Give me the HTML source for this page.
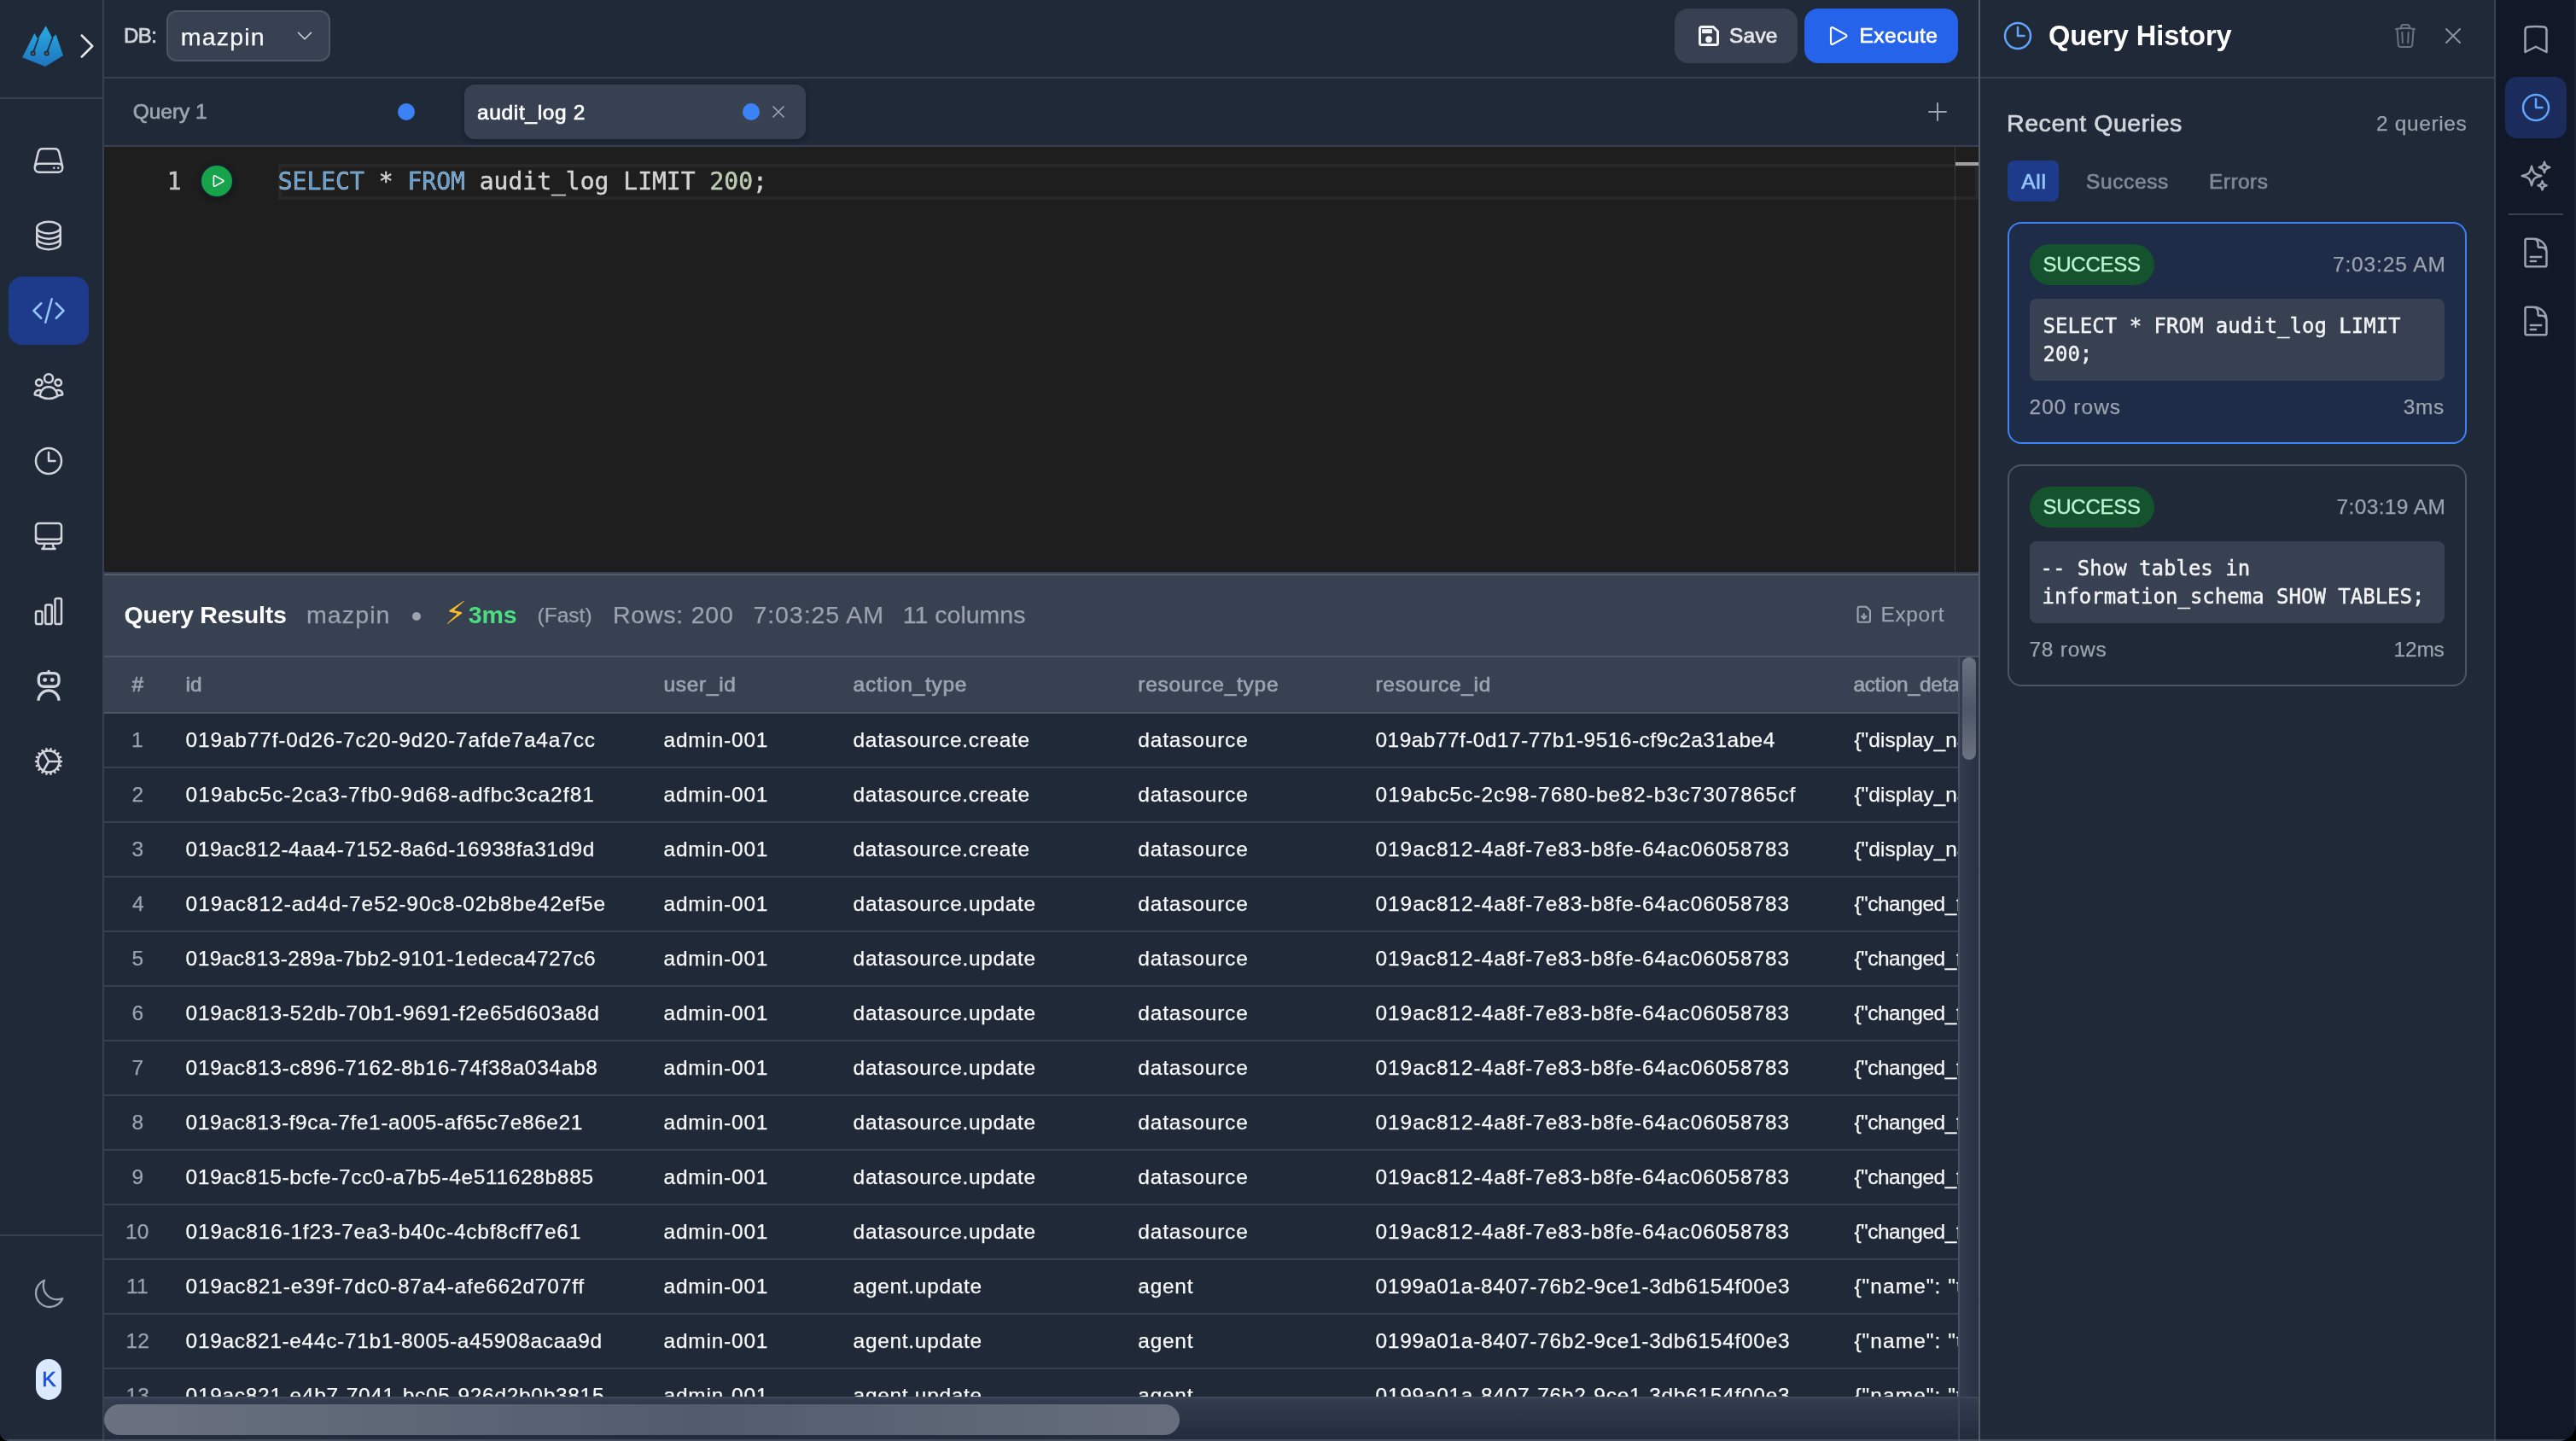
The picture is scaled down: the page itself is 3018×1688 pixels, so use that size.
<!DOCTYPE html>
<html lang="en"><head><meta charset="utf-8"><title>SQL Editor - Query History</title><style>
html,body{margin:0;padding:0;background:#000;}
#app{position:relative;width:3018px;height:1688px;overflow:hidden;background:#1f2937;font-family:'Liberation Sans',sans-serif;will-change:transform;}
#app div,#app svg{position:absolute;box-sizing:border-box;}
#app svg{overflow:visible;}
#app .t{white-space:pre;line-height:1;}
#app .t span{position:static;}
#app .c{overflow:hidden;}
</style></head><body><div id="app">
<div style="left:0px;top:0px;width:120px;height:1688px;background:#1f2937;"></div>
<div style="left:120px;top:0px;width:2px;height:1688px;background:#374151;"></div>
<div style="left:0px;top:114px;width:120px;height:2px;background:#374151;"></div>
<div style="left:0px;top:1446px;width:120px;height:2px;background:#374151;"></div>
<div style="left:122px;top:0px;width:2196px;height:90px;background:#1f2937;"></div>
<div style="left:122px;top:90px;width:2196px;height:2px;background:#374151;"></div>
<div style="left:122px;top:92px;width:2196px;height:78px;background:#1f2937;"></div>
<div style="left:122px;top:170px;width:2196px;height:2px;background:#374151;"></div>
<div style="left:122px;top:172px;width:2196px;height:498px;background:#1e1e1e;"></div>
<div style="left:326px;top:192px;width:1992px;height:42px;border:4px solid #282828;"></div>
<div style="left:2290px;top:172px;width:1px;height:498px;background:#3c3c3c;"></div>
<div style="left:2291px;top:190px;width:27px;height:4px;background:#a0a09c;"></div>
<div style="left:122px;top:670px;width:2196px;height:2px;background:#374151;"></div>
<div style="left:122px;top:672px;width:2196px;height:2px;background:#555b67;"></div>
<div style="left:122px;top:674px;width:2196px;height:94px;background:#374151;"></div>
<div style="left:122px;top:768px;width:2196px;height:2px;background:#4b5563;"></div>
<div style="left:122px;top:770px;width:2172px;height:64px;background:#374151;"></div>
<div style="left:122px;top:834px;width:2172px;height:2px;background:#4b5563;"></div>
<svg style="left:20px;top:24px" width="64" height="64" viewBox="20 24 64 64"><defs><linearGradient id="lg" x1="0" y1="0" x2="0" y2="1"><stop offset="0" stop-color="#29abe2"/><stop offset="1" stop-color="#1e74bf"/></linearGradient></defs><polygon points="26.1,67.2 40.4,39 44.4,45.8 53.7,30.3 61.3,44.6 65.6,40.3 74,65 53.1,78.1" fill="url(#lg)"/><path d="M45 45 L38.9 61.5 M61.6 44 L54.9 61.5" stroke="#1f2937" stroke-width="1.7" fill="none"/><circle cx="38.7" cy="62.5" r="3" fill="#1f2937"/><circle cx="54.7" cy="62.4" r="3" fill="#1f2937"/><circle cx="38.7" cy="62.5" r="1.5" fill="#5a5a5a"/><circle cx="54.7" cy="62.4" r="1.5" fill="#5a5a5a"/></svg>
<svg style="left:82px;top:34px" width="40" height="40" viewBox="0 0 24 24" fill="none" stroke="#e5e7eb" stroke-width="1.5" stroke-linecap="round" stroke-linejoin="round"><path d="m8.25 4.5 7.5 7.5-7.5 7.5"/></svg>
<div style="left:10px;top:324px;width:94px;height:80px;background:#1e3a8a;border-radius:16px;"></div>
<svg style="left:37px;top:168px" width="40" height="40" viewBox="0 0 24 24" fill="none" stroke="#d1d5db" stroke-width="1.5" stroke-linecap="round" stroke-linejoin="round"><path d="M21.75 17.25v-.228a4.5 4.5 0 0 0-.12-1.03l-2.268-9.64a3.375 3.375 0 0 0-3.285-2.602H7.923a3.375 3.375 0 0 0-3.285 2.602l-2.268 9.64a4.5 4.5 0 0 0-.12 1.03v.228m19.5 0a3 3 0 0 1-3 3H5.25a3 3 0 0 1-3-3m19.5 0a3 3 0 0 0-3-3H5.25a3 3 0 0 0-3 3m16.5 0h.008v.008h-.008v-.008Zm-3 0h.008v.008h-.008v-.008Z"/></svg>
<svg style="left:37px;top:256px" width="40" height="40" viewBox="0 0 24 24" fill="none" stroke="#d1d5db" stroke-width="1.5" stroke-linecap="round" stroke-linejoin="round"><path d="M20.25 6.375c0 2.278-3.694 4.125-8.25 4.125S3.75 8.653 3.75 6.375m16.5 0c0-2.278-3.694-4.125-8.25-4.125S3.75 4.097 3.75 6.375m16.5 0v11.25c0 2.278-3.694 4.125-8.25 4.125s-8.25-1.847-8.25-4.125V6.375m16.5 0v3.75m-16.5-3.75v3.75m16.5 0v3.75C20.25 16.153 16.556 18 12 18s-8.25-1.847-8.25-4.125v-3.75m16.5 0c0 2.278-3.694 4.125-8.25 4.125s-8.25-1.847-8.25-4.125"/></svg>
<svg style="left:37px;top:344px" width="40" height="40" viewBox="0 0 24 24" fill="none" stroke="#93c5fd" stroke-width="1.5" stroke-linecap="round" stroke-linejoin="round"><path d="M17.25 6.75 22.5 12l-5.25 5.25m-10.5 0L1.5 12l5.25-5.25m7.5-3-4.5 16.5"/></svg>
<svg style="left:37px;top:432px" width="40" height="40" viewBox="0 0 24 24" fill="none" stroke="#d1d5db" stroke-width="1.5" stroke-linecap="round" stroke-linejoin="round"><path d="M18 18.72a9.094 9.094 0 0 0 3.741-.479 3 3 0 0 0-4.682-2.72m.94 3.198.001.031c0 .225-.012.447-.037.666A11.944 11.944 0 0 1 12 21c-2.17 0-4.207-.576-5.963-1.584A6.062 6.062 0 0 1 6 18.719m12 0a5.971 5.971 0 0 0-.941-3.197m0 0A5.995 5.995 0 0 0 12 12.75a5.995 5.995 0 0 0-5.058 2.772m0 0a3 3 0 0 0-4.681 2.72 8.986 8.986 0 0 0 3.74.477m.94-3.197a5.971 5.971 0 0 0-.94 3.197M15 6.75a3 3 0 1 1-6 0 3 3 0 0 1 6 0Zm6 3a2.25 2.25 0 1 1-4.5 0 2.25 2.25 0 0 1 4.5 0Zm-13.5 0a2.25 2.25 0 1 1-4.5 0 2.25 2.25 0 0 1 4.5 0Z"/></svg>
<svg style="left:37px;top:520px" width="40" height="40" viewBox="0 0 24 24" fill="none" stroke="#d1d5db" stroke-width="1.5" stroke-linecap="round" stroke-linejoin="round"><path d="M12 6v6h4.5m4.5 0a9 9 0 1 1-18 0 9 9 0 0 1 18 0Z"/></svg>
<svg style="left:37px;top:608px" width="40" height="40" viewBox="0 0 24 24" fill="none" stroke="#d1d5db" stroke-width="1.5" stroke-linecap="round" stroke-linejoin="round"><path d="M9 17.25v1.007a3 3 0 0 1-.879 2.122L7.5 21h9l-.621-.621A3 3 0 0 1 15 18.257V17.25m6-12V15a2.25 2.25 0 0 1-2.25 2.25H5.25A2.25 2.25 0 0 1 3 15V5.25m18 0A2.25 2.25 0 0 0 18.75 3H5.25A2.25 2.25 0 0 0 3 5.25m18 0V12a2.25 2.25 0 0 1-2.25 2.25H5.25A2.25 2.25 0 0 1 3 12V5.25"/></svg>
<svg style="left:37px;top:696px" width="40" height="40" viewBox="0 0 24 24" fill="none" stroke="#d1d5db" stroke-width="1.5" stroke-linecap="round" stroke-linejoin="round"><path d="M3 13.125C3 12.504 3.504 12 4.125 12h2.25c.621 0 1.125.504 1.125 1.125v6.75C7.5 20.496 6.996 21 6.375 21h-2.25A1.125 1.125 0 0 1 3 19.875v-6.75ZM9.75 8.625c0-.621.504-1.125 1.125-1.125h2.25c.621 0 1.125.504 1.125 1.125v11.25c0 .621-.504 1.125-1.125 1.125h-2.25a1.125 1.125 0 0 1-1.125-1.125V8.625ZM16.5 4.125c0-.621.504-1.125 1.125-1.125h2.25C20.496 3 21 3.504 21 4.125v15.75c0 .621-.504 1.125-1.125 1.125h-2.25a1.125 1.125 0 0 1-1.125-1.125V4.125Z"/></svg>
<svg style="left:37px;top:784px" width="40" height="40" viewBox="0 0 24 24" fill="none" stroke="#d1d5db" stroke-width="2" stroke-linecap="round" stroke-linejoin="round"><rect x="5" y="2.75" width="14.2" height="9.4" rx="3.4"/><path d="M12 1.5v1"/><path d="M4.8 22.1a7.2 7.2 0 0 1 14.4 0" stroke-linecap="butt"/><circle cx="9.4" cy="7.45" r="1.45" fill="#d1d5db" stroke="none"/><circle cx="14.55" cy="7.45" r="1.45" fill="#d1d5db" stroke="none"/></svg>
<svg style="left:37px;top:872px" width="40" height="40" viewBox="0 0 24 24" fill="none" stroke="#d1d5db" stroke-width="1.5" stroke-linecap="round" stroke-linejoin="round"><path d="M4.5 12a7.5 7.5 0 0 0 15 0m-15 0a7.5 7.5 0 1 1 15 0m-15 0H3m16.5 0H21m-1.5 0H12m-8.457 3.077 1.41-.513m14.095-5.13 1.41-.513M5.106 17.785l1.15-.964m11.49-9.642 1.149-.964M7.501 19.795l.75-1.3m7.5-12.99.75-1.3m-6.063 16.658.26-1.477m2.605-14.772.26-1.477m0 17.726-.26-1.477M10.698 4.614l-.26-1.477M16.5 19.794l-.75-1.299M7.5 4.205 12 12m6.894 5.785-1.149-.964M6.256 7.178l-1.15-.964m15.352 8.864-1.41-.513M4.954 9.435l-1.41-.514M12.002 12l-3.75 6.495"/></svg>
<svg style="left:37px;top:1496px" width="40" height="40" viewBox="0 0 24 24" fill="none" stroke="#9ca3af" stroke-width="1.4" stroke-linecap="round" stroke-linejoin="round"><path d="M21.752 15.002A9.72 9.72 0 0 1 18 15.75c-5.385 0-9.75-4.365-9.75-9.75 0-1.33.266-2.597.748-3.752A9.753 9.753 0 0 0 3 11.25C3 16.635 7.365 21 12.75 21a9.753 9.753 0 0 0 9.002-5.998Z"/></svg>
<div style="left:42px;top:1592px;width:30px;height:48px;background:#dbeafe;border-radius:15px;"></div>
<div class="t" style="left:49.30px;top:1603.89px;font-size:24.48px;color:#1d4ed8;font-weight:500;-webkit-text-stroke:0.7px #1d4ed8;">K</div>
<div class="t" style="left:145.00px;top:29.90px;font-size:24.0px;color:#d1d5db;font-weight:500;letter-spacing:-0.500px;-webkit-text-stroke:0.7px #d1d5db;">DB:</div>
<div style="left:195px;top:12px;width:192px;height:60px;background:#374151;border-radius:12px;border:2px solid #4b5563;"></div>
<div class="t" style="left:211.80px;top:28.82px;font-size:28.56px;color:#f9fafb;letter-spacing:1.160px;-webkit-text-stroke:0.25px #f9fafb;">mazpin</div>
<svg style="left:345px;top:30px" width="24" height="24" viewBox="0 0 24 24" fill="none" stroke="#d1d5db" stroke-width="1.6" stroke-linecap="round" stroke-linejoin="round"><path d="m19.5 8.25-7.5 7.5-7.5-7.5"/></svg>
<div style="left:1962px;top:10px;width:144px;height:64px;background:#374151;border-radius:16px;"></div>
<svg style="left:1988px;top:28px" width="28" height="28" viewBox="0 0 28 28" fill="none" stroke="#f3f4f6" stroke-width="3" stroke-linejoin="round"><path d="M3.5 5.5a2 2 0 0 1 2-2h13.7l5.3 5.3v13.7a2 2 0 0 1-2 2h-17a2 2 0 0 1-2-2z"/><rect x="6.1" y="6.2" width="11.8" height="4.9" fill="#f3f4f6" stroke="none"/><circle cx="14" cy="18.1" r="3.9" fill="#f3f4f6" stroke="none"/></svg>
<div class="t" style="left:2026.00px;top:30.19px;font-size:24.48px;color:#e5e7eb;font-weight:500;letter-spacing:0.233px;-webkit-text-stroke:0.7px #e5e7eb;">Save</div>
<div style="left:2114px;top:10px;width:180px;height:64px;background:#2563eb;border-radius:16px;"></div>
<svg style="left:2138px;top:26px" width="32" height="32" viewBox="0 0 24 24" fill="none" stroke="#fff" stroke-width="1.6" stroke-linecap="round" stroke-linejoin="round"><path d="M5.25 5.653c0-.856.917-1.398 1.667-.986l11.54 6.347a1.125 1.125 0 0 1 0 1.972l-11.54 6.347a1.125 1.125 0 0 1-1.667-.986V5.653Z"/></svg>
<div class="t" style="left:2178.50px;top:30.19px;font-size:24.48px;color:#fff;font-weight:500;letter-spacing:0.500px;-webkit-text-stroke:0.7px #fff;">Execute</div>
<div class="t" style="left:155.70px;top:119.39px;font-size:24.48px;color:#9ca3af;font-weight:500;-webkit-text-stroke:0.7px #9ca3af;">Query 1</div>
<div style="left:466px;top:121px;width:20px;height:20px;background:#3b82f6;border-radius:50%;"></div>
<div style="left:544px;top:99px;width:400px;height:64px;background:#374151;border-radius:12px;box-shadow:0 2px 6px rgba(0,0,0,.25);"></div>
<div class="t" style="left:559.00px;top:119.59px;font-size:24.48px;color:#fff;font-weight:500;letter-spacing:0.660px;-webkit-text-stroke:0.7px #fff;">audit_log 2</div>
<div style="left:870px;top:121px;width:20px;height:20px;background:#3b82f6;border-radius:50%;"></div>
<svg style="left:900px;top:119px" width="24" height="24" viewBox="0 0 24 24" fill="none" stroke="#9ca3af" stroke-width="1.7" stroke-linecap="round" stroke-linejoin="round"><path d="M6 18 18 6M6 6l12 12"/></svg>
<svg style="left:2254px;top:115px" width="32" height="32" viewBox="0 0 24 24" fill="none" stroke="#9ca3af" stroke-width="1.5" stroke-linecap="round" stroke-linejoin="round"><path d="M12 4.5v15m7.5-7.5h-15"/></svg>
<div class="t" style="left:195.70px;top:199.48px;font-size:28.0px;color:#c6c6c6;font-family:'DejaVu Sans Mono','Liberation Mono',monospace;-webkit-text-stroke:0.45px #c6c6c6;">1</div>
<div style="left:234px;top:192px;width:40px;height:40px;background:#16a34a;border-radius:50%;border:2px solid #17202e;box-shadow:0 2px 6px rgba(0,0,0,.35);"></div>
<svg style="left:246px;top:202px" width="20" height="20" viewBox="0 0 24 24" fill="none" stroke="#fff" stroke-width="2" stroke-linecap="round" stroke-linejoin="round"><path d="M5.25 5.653c0-.856.917-1.398 1.667-.986l11.54 6.347a1.125 1.125 0 0 1 0 1.972l-11.54 6.347a1.125 1.125 0 0 1-1.667-.986V5.653Z"/></svg>
<div class="t" style="left:325.70px;top:199.48px;font-size:28.0px;color:#d4d4d4;font-family:'DejaVu Sans Mono','Liberation Mono',monospace;-webkit-text-stroke:0.45px #d4d4d4;"><span style="color:#569cd6">SELECT</span> * <span style="color:#569cd6">FROM</span> audit_log LIMIT <span style="color:#b5cea8">200</span>;</div>
<div class="t" style="left:145.60px;top:706.22px;font-size:28.56px;color:#fff;font-weight:700;letter-spacing:-0.283px;">Query Results</div>
<div class="t" style="left:359.00px;top:706.22px;font-size:28.56px;color:#9ca3af;letter-spacing:1.080px;-webkit-text-stroke:0.25px #9ca3af;">mazpin</div>
<div style="left:483px;top:717px;width:10px;height:10px;background:#9ca3af;border-radius:50%;"></div>
<div class="t" style="left:520.70px;top:699.85px;font-size:37.0px;color:#fbbf24;font-family:'DejaVu Sans',sans-serif;font-weight:700;">⚡</div>
<div class="t" style="left:548.80px;top:706.22px;font-size:28.56px;color:#4ade80;font-weight:700;letter-spacing:-0.150px;">3ms</div>
<div class="t" style="left:629.60px;top:708.69px;font-size:24.48px;color:#9ca3af;letter-spacing:0.020px;-webkit-text-stroke:0.25px #9ca3af;">(Fast)</div>
<div class="t" style="left:717.90px;top:706.22px;font-size:28.56px;color:#9ca3af;letter-spacing:0.750px;-webkit-text-stroke:0.25px #9ca3af;">Rows: 200</div>
<div class="t" style="left:882.40px;top:706.22px;font-size:28.56px;color:#9ca3af;letter-spacing:0.922px;-webkit-text-stroke:0.25px #9ca3af;">7:03:25 AM</div>
<div class="t" style="left:1057.80px;top:706.22px;font-size:28.56px;color:#9ca3af;letter-spacing:-0.022px;-webkit-text-stroke:0.25px #9ca3af;">11 columns</div>
<svg style="left:2173.2px;top:709.4px" width="21.5" height="21.5" viewBox="0 0 24 24" fill="none" stroke="#9ca3af" stroke-width="2.4" stroke-linecap="round" stroke-linejoin="round"><path d="M15 2H6a2 2 0 0 0-2 2v16a2 2 0 0 0 2 2h12a2 2 0 0 0 2-2V7Z"/><path d="M12 17.5v-6"/><path d="m9 14.5 3 3 3-3"/></svg>
<div class="t" style="left:2203.40px;top:707.89px;font-size:24.48px;color:#9ca3af;letter-spacing:0.680px;-webkit-text-stroke:0.25px #9ca3af;">Export</div>
<div class="t" style="left:154.60px;top:789.69px;font-size:24.48px;color:#9ca3af;font-weight:500;-webkit-text-stroke:0.7px #9ca3af;">#</div>
<div class="t" style="left:217.60px;top:789.69px;font-size:24.48px;color:#9ca3af;font-weight:500;-webkit-text-stroke:0.7px #9ca3af;">id</div>
<div class="t" style="left:777.50px;top:789.69px;font-size:24.48px;color:#9ca3af;font-weight:500;letter-spacing:0.700px;-webkit-text-stroke:0.7px #9ca3af;">user_id</div>
<div class="t" style="left:999.60px;top:789.69px;font-size:24.48px;color:#9ca3af;font-weight:500;letter-spacing:0.770px;-webkit-text-stroke:0.7px #9ca3af;">action_type</div>
<div class="t" style="left:1333.30px;top:789.69px;font-size:24.48px;color:#9ca3af;font-weight:500;letter-spacing:0.767px;-webkit-text-stroke:0.7px #9ca3af;">resource_type</div>
<div class="t" style="left:1611.50px;top:789.69px;font-size:24.48px;color:#9ca3af;font-weight:500;letter-spacing:0.700px;-webkit-text-stroke:0.7px #9ca3af;">resource_id</div>
<div class="c" style="left:2160px;top:772px;width:134px;height:60px"><div class="t" style="left:11.40px;top:17.69px;font-size:24.48px;color:#9ca3af;font-weight:500;letter-spacing:-0.192px;-webkit-text-stroke:0.7px #9ca3af;">action_details</div></div>
<div style="left:122px;top:898px;width:2172px;height:2px;background:#374151;"></div>
<div class="t" style="left:154.10px;top:854.99px;font-size:24.48px;color:#9ca3af;-webkit-text-stroke:0.25px #9ca3af;">1</div>
<div class="t" style="left:217.60px;top:854.99px;font-size:24.48px;color:#f9fafb;letter-spacing:0.829px;-webkit-text-stroke:0.25px #f9fafb;">019ab77f-0d26-7c20-9d20-7afde7a4a7cc</div>
<div class="t" style="left:777.50px;top:854.99px;font-size:24.48px;color:#f9fafb;letter-spacing:0.787px;-webkit-text-stroke:0.25px #f9fafb;">admin-001</div>
<div class="t" style="left:999.60px;top:854.99px;font-size:24.48px;color:#f9fafb;letter-spacing:0.662px;-webkit-text-stroke:0.25px #f9fafb;">datasource.create</div>
<div class="t" style="left:1333.30px;top:854.99px;font-size:24.48px;color:#f9fafb;letter-spacing:0.822px;-webkit-text-stroke:0.25px #f9fafb;">datasource</div>
<div class="t" style="left:1611.50px;top:854.99px;font-size:24.48px;color:#f9fafb;letter-spacing:0.460px;-webkit-text-stroke:0.25px #f9fafb;">019ab77f-0d17-77b1-9516-cf9c2a31abe4</div>
<div class="c" style="left:2160px;top:836px;width:134px;height:62px"><div class="t" style="left:12.40px;top:18.99px;font-size:24.48px;color:#f9fafb;letter-spacing:0.022px;-webkit-text-stroke:0.25px #f9fafb;">{"display_name": "demo"}</div></div>
<div style="left:122px;top:962px;width:2172px;height:2px;background:#374151;"></div>
<div class="t" style="left:154.60px;top:918.99px;font-size:24.48px;color:#9ca3af;-webkit-text-stroke:0.25px #9ca3af;">2</div>
<div class="t" style="left:217.60px;top:918.99px;font-size:24.48px;color:#f9fafb;letter-spacing:1.074px;-webkit-text-stroke:0.25px #f9fafb;">019abc5c-2ca3-7fb0-9d68-adfbc3ca2f81</div>
<div class="t" style="left:777.50px;top:918.99px;font-size:24.48px;color:#f9fafb;letter-spacing:0.787px;-webkit-text-stroke:0.25px #f9fafb;">admin-001</div>
<div class="t" style="left:999.60px;top:918.99px;font-size:24.48px;color:#f9fafb;letter-spacing:0.662px;-webkit-text-stroke:0.25px #f9fafb;">datasource.create</div>
<div class="t" style="left:1333.30px;top:918.99px;font-size:24.48px;color:#f9fafb;letter-spacing:0.822px;-webkit-text-stroke:0.25px #f9fafb;">datasource</div>
<div class="t" style="left:1611.50px;top:918.99px;font-size:24.48px;color:#f9fafb;letter-spacing:1.071px;-webkit-text-stroke:0.25px #f9fafb;">019abc5c-2c98-7680-be82-b3c7307865cf</div>
<div class="c" style="left:2160px;top:900px;width:134px;height:62px"><div class="t" style="left:12.40px;top:18.99px;font-size:24.48px;color:#f9fafb;letter-spacing:0.022px;-webkit-text-stroke:0.25px #f9fafb;">{"display_name": "demo"}</div></div>
<div style="left:122px;top:1026px;width:2172px;height:2px;background:#374151;"></div>
<div class="t" style="left:154.60px;top:982.99px;font-size:24.48px;color:#9ca3af;-webkit-text-stroke:0.25px #9ca3af;">3</div>
<div class="t" style="left:217.60px;top:982.99px;font-size:24.48px;color:#f9fafb;letter-spacing:0.540px;-webkit-text-stroke:0.25px #f9fafb;">019ac812-4aa4-7152-8a6d-16938fa31d9d</div>
<div class="t" style="left:777.50px;top:982.99px;font-size:24.48px;color:#f9fafb;letter-spacing:0.787px;-webkit-text-stroke:0.25px #f9fafb;">admin-001</div>
<div class="t" style="left:999.60px;top:982.99px;font-size:24.48px;color:#f9fafb;letter-spacing:0.662px;-webkit-text-stroke:0.25px #f9fafb;">datasource.create</div>
<div class="t" style="left:1333.30px;top:982.99px;font-size:24.48px;color:#f9fafb;letter-spacing:0.822px;-webkit-text-stroke:0.25px #f9fafb;">datasource</div>
<div class="t" style="left:1611.50px;top:982.99px;font-size:24.48px;color:#f9fafb;letter-spacing:0.943px;-webkit-text-stroke:0.25px #f9fafb;">019ac812-4a8f-7e83-b8fe-64ac06058783</div>
<div class="c" style="left:2160px;top:964px;width:134px;height:62px"><div class="t" style="left:12.40px;top:18.99px;font-size:24.48px;color:#f9fafb;letter-spacing:0.022px;-webkit-text-stroke:0.25px #f9fafb;">{"display_name": "demo"}</div></div>
<div style="left:122px;top:1090px;width:2172px;height:2px;background:#374151;"></div>
<div class="t" style="left:155.10px;top:1046.99px;font-size:24.48px;color:#9ca3af;-webkit-text-stroke:0.25px #9ca3af;">4</div>
<div class="t" style="left:217.60px;top:1046.99px;font-size:24.48px;color:#f9fafb;letter-spacing:0.946px;-webkit-text-stroke:0.25px #f9fafb;">019ac812-ad4d-7e52-90c8-02b8be42ef5e</div>
<div class="t" style="left:777.50px;top:1046.99px;font-size:24.48px;color:#f9fafb;letter-spacing:0.787px;-webkit-text-stroke:0.25px #f9fafb;">admin-001</div>
<div class="t" style="left:999.60px;top:1046.99px;font-size:24.48px;color:#f9fafb;letter-spacing:0.681px;-webkit-text-stroke:0.25px #f9fafb;">datasource.update</div>
<div class="t" style="left:1333.30px;top:1046.99px;font-size:24.48px;color:#f9fafb;letter-spacing:0.822px;-webkit-text-stroke:0.25px #f9fafb;">datasource</div>
<div class="t" style="left:1611.50px;top:1046.99px;font-size:24.48px;color:#f9fafb;letter-spacing:0.943px;-webkit-text-stroke:0.25px #f9fafb;">019ac812-4a8f-7e83-b8fe-64ac06058783</div>
<div class="c" style="left:2160px;top:1028px;width:134px;height:62px"><div class="t" style="left:12.40px;top:18.99px;font-size:24.48px;color:#f9fafb;letter-spacing:-0.500px;-webkit-text-stroke:0.25px #f9fafb;">{"changed_fields": []}</div></div>
<div style="left:122px;top:1154px;width:2172px;height:2px;background:#374151;"></div>
<div class="t" style="left:154.60px;top:1110.99px;font-size:24.48px;color:#9ca3af;-webkit-text-stroke:0.25px #9ca3af;">5</div>
<div class="t" style="left:217.60px;top:1110.99px;font-size:24.48px;color:#f9fafb;letter-spacing:0.457px;-webkit-text-stroke:0.25px #f9fafb;">019ac813-289a-7bb2-9101-1edeca4727c6</div>
<div class="t" style="left:777.50px;top:1110.99px;font-size:24.48px;color:#f9fafb;letter-spacing:0.787px;-webkit-text-stroke:0.25px #f9fafb;">admin-001</div>
<div class="t" style="left:999.60px;top:1110.99px;font-size:24.48px;color:#f9fafb;letter-spacing:0.681px;-webkit-text-stroke:0.25px #f9fafb;">datasource.update</div>
<div class="t" style="left:1333.30px;top:1110.99px;font-size:24.48px;color:#f9fafb;letter-spacing:0.822px;-webkit-text-stroke:0.25px #f9fafb;">datasource</div>
<div class="t" style="left:1611.50px;top:1110.99px;font-size:24.48px;color:#f9fafb;letter-spacing:0.943px;-webkit-text-stroke:0.25px #f9fafb;">019ac812-4a8f-7e83-b8fe-64ac06058783</div>
<div class="c" style="left:2160px;top:1092px;width:134px;height:62px"><div class="t" style="left:12.40px;top:18.99px;font-size:24.48px;color:#f9fafb;letter-spacing:-0.500px;-webkit-text-stroke:0.25px #f9fafb;">{"changed_fields": []}</div></div>
<div style="left:122px;top:1218px;width:2172px;height:2px;background:#374151;"></div>
<div class="t" style="left:154.60px;top:1174.99px;font-size:24.48px;color:#9ca3af;-webkit-text-stroke:0.25px #9ca3af;">6</div>
<div class="t" style="left:217.60px;top:1174.99px;font-size:24.48px;color:#f9fafb;letter-spacing:0.700px;-webkit-text-stroke:0.25px #f9fafb;">019ac813-52db-70b1-9691-f2e65d603a8d</div>
<div class="t" style="left:777.50px;top:1174.99px;font-size:24.48px;color:#f9fafb;letter-spacing:0.787px;-webkit-text-stroke:0.25px #f9fafb;">admin-001</div>
<div class="t" style="left:999.60px;top:1174.99px;font-size:24.48px;color:#f9fafb;letter-spacing:0.681px;-webkit-text-stroke:0.25px #f9fafb;">datasource.update</div>
<div class="t" style="left:1333.30px;top:1174.99px;font-size:24.48px;color:#f9fafb;letter-spacing:0.822px;-webkit-text-stroke:0.25px #f9fafb;">datasource</div>
<div class="t" style="left:1611.50px;top:1174.99px;font-size:24.48px;color:#f9fafb;letter-spacing:0.943px;-webkit-text-stroke:0.25px #f9fafb;">019ac812-4a8f-7e83-b8fe-64ac06058783</div>
<div class="c" style="left:2160px;top:1156px;width:134px;height:62px"><div class="t" style="left:12.40px;top:18.99px;font-size:24.48px;color:#f9fafb;letter-spacing:-0.500px;-webkit-text-stroke:0.25px #f9fafb;">{"changed_fields": []}</div></div>
<div style="left:122px;top:1282px;width:2172px;height:2px;background:#374151;"></div>
<div class="t" style="left:154.60px;top:1238.99px;font-size:24.48px;color:#9ca3af;-webkit-text-stroke:0.25px #9ca3af;">7</div>
<div class="t" style="left:217.60px;top:1238.99px;font-size:24.48px;color:#f9fafb;letter-spacing:0.680px;-webkit-text-stroke:0.25px #f9fafb;">019ac813-c896-7162-8b16-74f38a034ab8</div>
<div class="t" style="left:777.50px;top:1238.99px;font-size:24.48px;color:#f9fafb;letter-spacing:0.787px;-webkit-text-stroke:0.25px #f9fafb;">admin-001</div>
<div class="t" style="left:999.60px;top:1238.99px;font-size:24.48px;color:#f9fafb;letter-spacing:0.681px;-webkit-text-stroke:0.25px #f9fafb;">datasource.update</div>
<div class="t" style="left:1333.30px;top:1238.99px;font-size:24.48px;color:#f9fafb;letter-spacing:0.822px;-webkit-text-stroke:0.25px #f9fafb;">datasource</div>
<div class="t" style="left:1611.50px;top:1238.99px;font-size:24.48px;color:#f9fafb;letter-spacing:0.943px;-webkit-text-stroke:0.25px #f9fafb;">019ac812-4a8f-7e83-b8fe-64ac06058783</div>
<div class="c" style="left:2160px;top:1220px;width:134px;height:62px"><div class="t" style="left:12.40px;top:18.99px;font-size:24.48px;color:#f9fafb;letter-spacing:-0.500px;-webkit-text-stroke:0.25px #f9fafb;">{"changed_fields": []}</div></div>
<div style="left:122px;top:1346px;width:2172px;height:2px;background:#374151;"></div>
<div class="t" style="left:154.60px;top:1302.99px;font-size:24.48px;color:#9ca3af;-webkit-text-stroke:0.25px #9ca3af;">8</div>
<div class="t" style="left:217.60px;top:1302.99px;font-size:24.48px;color:#f9fafb;letter-spacing:0.609px;-webkit-text-stroke:0.25px #f9fafb;">019ac813-f9ca-7fe1-a005-af65c7e86e21</div>
<div class="t" style="left:777.50px;top:1302.99px;font-size:24.48px;color:#f9fafb;letter-spacing:0.787px;-webkit-text-stroke:0.25px #f9fafb;">admin-001</div>
<div class="t" style="left:999.60px;top:1302.99px;font-size:24.48px;color:#f9fafb;letter-spacing:0.681px;-webkit-text-stroke:0.25px #f9fafb;">datasource.update</div>
<div class="t" style="left:1333.30px;top:1302.99px;font-size:24.48px;color:#f9fafb;letter-spacing:0.822px;-webkit-text-stroke:0.25px #f9fafb;">datasource</div>
<div class="t" style="left:1611.50px;top:1302.99px;font-size:24.48px;color:#f9fafb;letter-spacing:0.943px;-webkit-text-stroke:0.25px #f9fafb;">019ac812-4a8f-7e83-b8fe-64ac06058783</div>
<div class="c" style="left:2160px;top:1284px;width:134px;height:62px"><div class="t" style="left:12.40px;top:18.99px;font-size:24.48px;color:#f9fafb;letter-spacing:-0.500px;-webkit-text-stroke:0.25px #f9fafb;">{"changed_fields": []}</div></div>
<div style="left:122px;top:1410px;width:2172px;height:2px;background:#374151;"></div>
<div class="t" style="left:154.60px;top:1366.99px;font-size:24.48px;color:#9ca3af;-webkit-text-stroke:0.25px #9ca3af;">9</div>
<div class="t" style="left:217.60px;top:1366.99px;font-size:24.48px;color:#f9fafb;letter-spacing:0.671px;-webkit-text-stroke:0.25px #f9fafb;">019ac815-bcfe-7cc0-a7b5-4e511628b885</div>
<div class="t" style="left:777.50px;top:1366.99px;font-size:24.48px;color:#f9fafb;letter-spacing:0.787px;-webkit-text-stroke:0.25px #f9fafb;">admin-001</div>
<div class="t" style="left:999.60px;top:1366.99px;font-size:24.48px;color:#f9fafb;letter-spacing:0.681px;-webkit-text-stroke:0.25px #f9fafb;">datasource.update</div>
<div class="t" style="left:1333.30px;top:1366.99px;font-size:24.48px;color:#f9fafb;letter-spacing:0.822px;-webkit-text-stroke:0.25px #f9fafb;">datasource</div>
<div class="t" style="left:1611.50px;top:1366.99px;font-size:24.48px;color:#f9fafb;letter-spacing:0.943px;-webkit-text-stroke:0.25px #f9fafb;">019ac812-4a8f-7e83-b8fe-64ac06058783</div>
<div class="c" style="left:2160px;top:1348px;width:134px;height:62px"><div class="t" style="left:12.40px;top:18.99px;font-size:24.48px;color:#f9fafb;letter-spacing:-0.500px;-webkit-text-stroke:0.25px #f9fafb;">{"changed_fields": []}</div></div>
<div style="left:122px;top:1474px;width:2172px;height:2px;background:#374151;"></div>
<div class="t" style="left:147.10px;top:1430.99px;font-size:24.48px;color:#9ca3af;-webkit-text-stroke:0.25px #9ca3af;">10</div>
<div class="t" style="left:217.60px;top:1430.99px;font-size:24.48px;color:#f9fafb;letter-spacing:0.797px;-webkit-text-stroke:0.25px #f9fafb;">019ac816-1f23-7ea3-b40c-4cbf8cff7e61</div>
<div class="t" style="left:777.50px;top:1430.99px;font-size:24.48px;color:#f9fafb;letter-spacing:0.787px;-webkit-text-stroke:0.25px #f9fafb;">admin-001</div>
<div class="t" style="left:999.60px;top:1430.99px;font-size:24.48px;color:#f9fafb;letter-spacing:0.681px;-webkit-text-stroke:0.25px #f9fafb;">datasource.update</div>
<div class="t" style="left:1333.30px;top:1430.99px;font-size:24.48px;color:#f9fafb;letter-spacing:0.822px;-webkit-text-stroke:0.25px #f9fafb;">datasource</div>
<div class="t" style="left:1611.50px;top:1430.99px;font-size:24.48px;color:#f9fafb;letter-spacing:0.943px;-webkit-text-stroke:0.25px #f9fafb;">019ac812-4a8f-7e83-b8fe-64ac06058783</div>
<div class="c" style="left:2160px;top:1412px;width:134px;height:62px"><div class="t" style="left:12.40px;top:18.99px;font-size:24.48px;color:#f9fafb;letter-spacing:-0.500px;-webkit-text-stroke:0.25px #f9fafb;">{"changed_fields": []}</div></div>
<div style="left:122px;top:1538px;width:2172px;height:2px;background:#374151;"></div>
<div class="t" style="left:148.10px;top:1494.99px;font-size:24.48px;color:#9ca3af;-webkit-text-stroke:0.25px #9ca3af;">11</div>
<div class="t" style="left:217.60px;top:1494.99px;font-size:24.48px;color:#f9fafb;letter-spacing:0.826px;-webkit-text-stroke:0.25px #f9fafb;">019ac821-e39f-7dc0-87a4-afe662d707ff</div>
<div class="t" style="left:777.50px;top:1494.99px;font-size:24.48px;color:#f9fafb;letter-spacing:0.787px;-webkit-text-stroke:0.25px #f9fafb;">admin-001</div>
<div class="t" style="left:999.60px;top:1494.99px;font-size:24.48px;color:#f9fafb;letter-spacing:0.700px;-webkit-text-stroke:0.25px #f9fafb;">agent.update</div>
<div class="t" style="left:1333.30px;top:1494.99px;font-size:24.48px;color:#f9fafb;letter-spacing:0.725px;-webkit-text-stroke:0.25px #f9fafb;">agent</div>
<div class="t" style="left:1611.50px;top:1494.99px;font-size:24.48px;color:#f9fafb;letter-spacing:0.720px;-webkit-text-stroke:0.25px #f9fafb;">0199a01a-8407-76b2-9ce1-3db6154f00e3</div>
<div class="c" style="left:2160px;top:1476px;width:134px;height:62px"><div class="t" style="left:12.40px;top:18.99px;font-size:24.48px;color:#f9fafb;letter-spacing:1.056px;-webkit-text-stroke:0.25px #f9fafb;">{"name": "test"}</div></div>
<div style="left:122px;top:1602px;width:2172px;height:2px;background:#374151;"></div>
<div class="t" style="left:147.60px;top:1558.99px;font-size:24.48px;color:#9ca3af;-webkit-text-stroke:0.25px #9ca3af;">12</div>
<div class="t" style="left:217.60px;top:1558.99px;font-size:24.48px;color:#f9fafb;letter-spacing:0.677px;-webkit-text-stroke:0.25px #f9fafb;">019ac821-e44c-71b1-8005-a45908acaa9d</div>
<div class="t" style="left:777.50px;top:1558.99px;font-size:24.48px;color:#f9fafb;letter-spacing:0.787px;-webkit-text-stroke:0.25px #f9fafb;">admin-001</div>
<div class="t" style="left:999.60px;top:1558.99px;font-size:24.48px;color:#f9fafb;letter-spacing:0.700px;-webkit-text-stroke:0.25px #f9fafb;">agent.update</div>
<div class="t" style="left:1333.30px;top:1558.99px;font-size:24.48px;color:#f9fafb;letter-spacing:0.725px;-webkit-text-stroke:0.25px #f9fafb;">agent</div>
<div class="t" style="left:1611.50px;top:1558.99px;font-size:24.48px;color:#f9fafb;letter-spacing:0.720px;-webkit-text-stroke:0.25px #f9fafb;">0199a01a-8407-76b2-9ce1-3db6154f00e3</div>
<div class="c" style="left:2160px;top:1540px;width:134px;height:62px"><div class="t" style="left:12.40px;top:18.99px;font-size:24.48px;color:#f9fafb;letter-spacing:1.056px;-webkit-text-stroke:0.25px #f9fafb;">{"name": "test"}</div></div>
<div class="c" style="left:122px;top:1604px;width:2172px;height:32px"><div class="t" style="left:25.60px;top:18.99px;font-size:24.48px;color:#9ca3af;-webkit-text-stroke:0.25px #9ca3af;">13</div></div>
<div class="c" style="left:122px;top:1604px;width:2172px;height:32px"><div class="t" style="left:95.60px;top:18.99px;font-size:24.48px;color:#f9fafb;letter-spacing:0.703px;-webkit-text-stroke:0.25px #f9fafb;">019ac821-e4b7-7041-bc05-926d2b0b3815</div></div>
<div class="c" style="left:122px;top:1604px;width:2172px;height:32px"><div class="t" style="left:655.50px;top:18.99px;font-size:24.48px;color:#f9fafb;letter-spacing:0.787px;-webkit-text-stroke:0.25px #f9fafb;">admin-001</div></div>
<div class="c" style="left:122px;top:1604px;width:2172px;height:32px"><div class="t" style="left:877.60px;top:18.99px;font-size:24.48px;color:#f9fafb;letter-spacing:0.700px;-webkit-text-stroke:0.25px #f9fafb;">agent.update</div></div>
<div class="c" style="left:122px;top:1604px;width:2172px;height:32px"><div class="t" style="left:1211.30px;top:18.99px;font-size:24.48px;color:#f9fafb;letter-spacing:0.725px;-webkit-text-stroke:0.25px #f9fafb;">agent</div></div>
<div class="c" style="left:122px;top:1604px;width:2172px;height:32px"><div class="t" style="left:1489.50px;top:18.99px;font-size:24.48px;color:#f9fafb;letter-spacing:0.720px;-webkit-text-stroke:0.25px #f9fafb;">0199a01a-8407-76b2-9ce1-3db6154f00e3</div></div>
<div class="c" style="left:2160px;top:1604px;width:134px;height:32px"><div class="t" style="left:12.40px;top:18.99px;font-size:24.48px;color:#f9fafb;letter-spacing:1.056px;-webkit-text-stroke:0.25px #f9fafb;">{"name": "test"}</div></div>
<div style="left:2294px;top:770px;width:24px;height:866px;background:linear-gradient(90deg,#343e50,#273141);"></div>
<div style="left:2294px;top:770px;width:2px;height:918px;background:#465062;"></div>
<div style="left:2299px;top:770px;width:16px;height:120px;background:linear-gradient(180deg,#6b7280,#4d5768 50%,#6b7280);border-radius:8px;"></div>
<div style="left:122px;top:1636px;width:2196px;height:52px;background:linear-gradient(180deg,#343e50,#222b3b);"></div>
<div style="left:122px;top:1636px;width:2196px;height:2px;background:#3d4758;"></div>
<div style="left:2294px;top:1636px;width:2px;height:52px;background:#3d4758;"></div>
<div style="left:122px;top:1645px;width:1260px;height:36px;background:linear-gradient(90deg,#6a7281,#525c6c 55%,#666e7d);border-radius:18px;"></div>
<div style="left:2318px;top:0px;width:2px;height:1688px;background:#535b69;"></div>
<div style="left:2320px;top:0px;width:602px;height:1688px;background:#1f2937;"></div>
<div style="left:2320px;top:90px;width:602px;height:2px;background:#374151;"></div>
<svg style="left:2344px;top:22px" width="40" height="40" viewBox="0 0 24 24" fill="none" stroke="#60a5fa" stroke-width="1.5" stroke-linecap="round" stroke-linejoin="round"><path d="M12 6v6h4.5m4.5 0a9 9 0 1 1-18 0 9 9 0 0 1 18 0Z"/></svg>
<div class="t" style="left:2399.90px;top:26.26px;font-size:32.64px;color:#fff;font-weight:700;letter-spacing:-0.083px;">Query History</div>
<svg style="left:2802px;top:26px" width="32" height="32" viewBox="0 0 24 24" fill="none" stroke="#6b7280" stroke-width="1.5" stroke-linecap="round" stroke-linejoin="round"><path d="m14.74 9-.346 9m-4.788 0L9.26 9m9.968-3.21c.342.052.682.107 1.022.166m-1.022-.165L18.16 19.673a2.25 2.25 0 0 1-2.244 2.077H8.084a2.25 2.25 0 0 1-2.244-2.077L4.772 5.79m14.456 0a48.108 48.108 0 0 0-3.478-.397m-12 .562c.34-.059.68-.114 1.022-.165m0 0a48.11 48.11 0 0 1 3.478-.397m7.5 0v-.916c0-1.18-.91-2.164-2.09-2.201a51.964 51.964 0 0 0-3.32 0c-1.18.037-2.09 1.022-2.09 2.201v.916m7.5 0a48.667 48.667 0 0 0-7.5 0"/></svg>
<svg style="left:2858px;top:26px" width="32" height="32" viewBox="0 0 24 24" fill="none" stroke="#8b93a1" stroke-width="1.5" stroke-linecap="round" stroke-linejoin="round"><path d="M6 18 18 6M6 6l12 12"/></svg>
<div class="t" style="left:2351.00px;top:130.02px;font-size:28.56px;color:#d1d5db;font-weight:500;letter-spacing:0.538px;-webkit-text-stroke:0.7px #d1d5db;">Recent Queries</div>
<div class="t" style="left:2784.00px;top:133.49px;font-size:24.48px;color:#9ca3af;letter-spacing:0.650px;-webkit-text-stroke:0.25px #9ca3af;">2 queries</div>
<div style="left:2352px;top:188px;width:60px;height:48px;background:#1e3a8a;border-radius:8px;"></div>
<div class="t" style="left:2368.30px;top:200.79px;font-size:24.48px;color:#93c5fd;font-weight:500;letter-spacing:0.700px;-webkit-text-stroke:0.7px #93c5fd;">All</div>
<div class="t" style="left:2444.00px;top:200.79px;font-size:24.48px;color:#808896;font-weight:500;letter-spacing:0.633px;-webkit-text-stroke:0.7px #808896;">Success</div>
<div class="t" style="left:2588.00px;top:200.79px;font-size:24.48px;color:#808896;font-weight:500;letter-spacing:0.460px;-webkit-text-stroke:0.7px #808896;">Errors</div>
<div style="left:2352px;top:260px;width:538px;height:260px;background:#1f2c48;border-radius:16px;border:2px solid #3b82f6;"></div>
<div style="left:2378px;top:286px;width:146px;height:48px;background:#14532d;border-radius:24px;"></div>
<div class="t" style="left:2393.50px;top:297.80px;font-size:24.0px;color:#bbf7d0;font-weight:500;letter-spacing:-0.250px;-webkit-text-stroke:0.35px #bbf7d0;">SUCCESS</div>
<div class="t" style="left:2732.90px;top:298.19px;font-size:24.48px;color:#9ca3af;letter-spacing:0.900px;-webkit-text-stroke:0.25px #9ca3af;">7:03:25 AM</div>
<div style="left:2378px;top:350px;width:486px;height:96px;background:#374151;border-radius:8px;"></div>
<div class="t" style="left:2393.50px;top:370.14px;font-size:24.0px;color:#f3f4f6;font-family:'DejaVu Sans Mono','Liberation Mono',monospace;-webkit-text-stroke:0.45px #f3f4f6;">SELECT * FROM audit_log LIMIT</div>
<div class="t" style="left:2393.50px;top:402.84px;font-size:24.0px;color:#f3f4f6;font-family:'DejaVu Sans Mono','Liberation Mono',monospace;-webkit-text-stroke:0.45px #f3f4f6;">200;</div>
<div class="t" style="left:2377.50px;top:465.49px;font-size:24.48px;color:#9ca3af;letter-spacing:1.043px;-webkit-text-stroke:0.25px #9ca3af;">200 rows</div>
<div class="t" style="left:2815.80px;top:465.49px;font-size:24.48px;color:#9ca3af;letter-spacing:0.600px;-webkit-text-stroke:0.25px #9ca3af;">3ms</div>
<div style="left:2352px;top:544px;width:538px;height:260px;background:#1f2937;border-radius:16px;border:2px solid #4b5563;"></div>
<div style="left:2378px;top:570px;width:146px;height:48px;background:#14532d;border-radius:24px;"></div>
<div class="t" style="left:2393.50px;top:581.80px;font-size:24.0px;color:#bbf7d0;font-weight:500;letter-spacing:-0.250px;-webkit-text-stroke:0.35px #bbf7d0;">SUCCESS</div>
<div class="t" style="left:2737.50px;top:582.19px;font-size:24.48px;color:#9ca3af;letter-spacing:0.389px;-webkit-text-stroke:0.25px #9ca3af;">7:03:19 AM</div>
<div style="left:2378px;top:634px;width:486px;height:96px;background:#374151;border-radius:8px;"></div>
<div class="t" style="left:2390.50px;top:654.14px;font-size:24.0px;color:#f3f4f6;font-family:'DejaVu Sans Mono','Liberation Mono',monospace;-webkit-text-stroke:0.45px #f3f4f6;">-- Show tables in</div>
<div class="t" style="left:2392.50px;top:686.84px;font-size:24.0px;color:#f3f4f6;font-family:'DejaVu Sans Mono','Liberation Mono',monospace;-webkit-text-stroke:0.45px #f3f4f6;">information_schema SHOW TABLES;</div>
<div class="t" style="left:2377.50px;top:749.49px;font-size:24.48px;color:#9ca3af;letter-spacing:0.750px;-webkit-text-stroke:0.25px #9ca3af;">78 rows</div>
<div class="t" style="left:2804.50px;top:749.49px;font-size:24.48px;color:#9ca3af;letter-spacing:-0.167px;-webkit-text-stroke:0.25px #9ca3af;">12ms</div>
<div style="left:2922px;top:0px;width:2px;height:1688px;background:#374151;"></div>
<div style="left:2924px;top:0px;width:94px;height:1688px;background:#111827;"></div>
<div style="left:2935px;top:90px;width:72px;height:72px;background:#1a2b5c;border-radius:14px;"></div>
<svg style="left:2951px;top:26px" width="40" height="40" viewBox="0 0 24 24" fill="none" stroke="#9ca3af" stroke-width="1.5" stroke-linecap="round" stroke-linejoin="round"><path d="M17.593 3.322c1.1.128 1.907 1.077 1.907 2.185V21L12 17.25 4.5 21V5.507c0-1.108.806-2.057 1.907-2.185a48.507 48.507 0 0 1 11.186 0Z"/></svg>
<svg style="left:2951px;top:106px" width="40" height="40" viewBox="0 0 24 24" fill="none" stroke="#60a5fa" stroke-width="1.5" stroke-linecap="round" stroke-linejoin="round"><path d="M12 6v6h4.5m4.5 0a9 9 0 1 1-18 0 9 9 0 0 1 18 0Z"/></svg>
<svg style="left:2951px;top:186px" width="40" height="40" viewBox="0 0 24 24" fill="none" stroke="#9ca3af" stroke-width="1.5" stroke-linecap="round" stroke-linejoin="round"><path d="M9.813 15.904 9 18.75l-.813-2.846a4.5 4.5 0 0 0-3.09-3.09L2.25 12l2.846-.813a4.5 4.5 0 0 0 3.09-3.09L9 5.25l.813 2.846a4.5 4.5 0 0 0 3.09 3.09L15.75 12l-2.846.813a4.5 4.5 0 0 0-3.09 3.09ZM18.259 8.715 18 9.75l-.259-1.035a3.375 3.375 0 0 0-2.455-2.456L14.25 6l1.036-.259a3.375 3.375 0 0 0 2.455-2.456L18 2.25l.259 1.035a3.375 3.375 0 0 0 2.456 2.456L21.75 6l-1.035.259a3.375 3.375 0 0 0-2.456 2.456ZM16.894 20.567 16.5 21.75l-.394-1.183a2.25 2.25 0 0 0-1.423-1.423L13.5 18.75l1.183-.394a2.25 2.25 0 0 0 1.423-1.423l.394-1.183.394 1.183a2.25 2.25 0 0 0 1.423 1.423l1.183.394-1.183.394a2.25 2.25 0 0 0-1.423 1.423Z"/></svg>
<div style="left:2939px;top:250px;width:64px;height:2px;background:#374151;"></div>
<svg style="left:2951px;top:276px" width="40" height="40" viewBox="0 0 24 24" fill="none" stroke="#9ca3af" stroke-width="1.5" stroke-linecap="round" stroke-linejoin="round"><path d="M19.5 14.25v-2.625a3.375 3.375 0 0 0-3.375-3.375h-1.5A1.125 1.125 0 0 1 13.5 7.125v-1.5a3.375 3.375 0 0 0-3.375-3.375H8.25m0 12.75h7.5m-7.5 3H12M10.5 2.25H5.625c-.621 0-1.125.504-1.125 1.125v17.25c0 .621.504 1.125 1.125 1.125h12.75c.621 0 1.125-.504 1.125-1.125V11.25a9 9 0 0 0-9-9Z"/></svg>
<svg style="left:2951px;top:356px" width="40" height="40" viewBox="0 0 24 24" fill="none" stroke="#9ca3af" stroke-width="1.5" stroke-linecap="round" stroke-linejoin="round"><path d="M19.5 14.25v-2.625a3.375 3.375 0 0 0-3.375-3.375h-1.5A1.125 1.125 0 0 1 13.5 7.125v-1.5a3.375 3.375 0 0 0-3.375-3.375H8.25m0 12.75h7.5m-7.5 3H12M10.5 2.25H5.625c-.621 0-1.125.504-1.125 1.125v17.25c0 .621.504 1.125 1.125 1.125h12.75c.621 0 1.125-.504 1.125-1.125V11.25a9 9 0 0 0-9-9Z"/></svg>
<div style="left:3016px;top:0px;width:2px;height:1670px;background:#1c2433;"></div>
<div style="left:0px;top:1686px;width:3018px;height:2px;background:rgba(100,108,122,.55);"></div>
<svg style="left:0;top:1678px" width="10" height="10" viewBox="0 0 10 10"><path d="M0 0v10h10A10 10 0 0 1 0 0z" fill="#000" stroke="none"/></svg>
<svg style="left:2998px;top:1668px" width="20" height="20" viewBox="0 0 20 20"><path d="M20 0v20H0A20 20 0 0 0 20 0z" fill="#000" stroke="none"/></svg>
</div></body></html>
